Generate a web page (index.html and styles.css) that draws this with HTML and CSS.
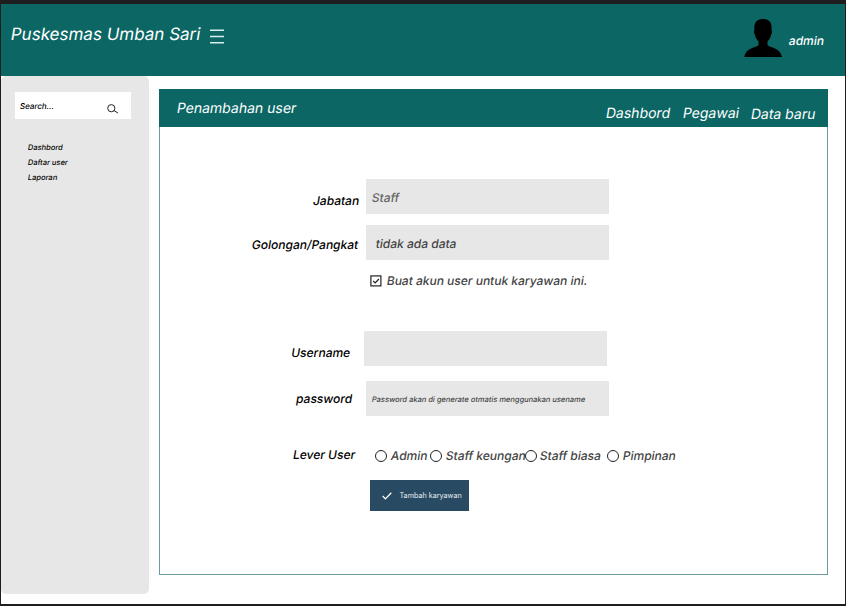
FILE: index.html
```html
<!DOCTYPE html>
<html lang="id">
<head>
<meta charset="utf-8">
<title>Puskesmas Umban Sari</title>
<link rel="stylesheet" href="styles.css">
</head>
<body>
<div class="frame">
  <header class="topbar">
    <h1 class="brand slant">Puskesmas Umban Sari</h1>
    <svg class="burger" width="14" height="15" viewBox="0 0 14 15"><path d="M0 1.300h14M0 7.500h14M0 13.700h14"/></svg>
    <svg class="avatar" width="38" height="38" viewBox="0 0 38 38"><path d="M19 0c5 0 8.600 2.600 8.600 8v3.500c.8.300.7 2.600-.5 4.200-.5 2.800-1.800 5-3.600 6.700v3.600c2 2.600 13 2.800 14.500 12H.2c1.500-9.200 12.300-9.400 14.300-12v-3.600c-1.800-1.700-3.100-3.900-3.600-6.700-1.200-1.600-1.300-3.900-.5-4.200V8C10.400 2.600 14 0 19 0z"/></svg>
    <span class="account slant">admin</span>
  </header>
  <div class="body">
    <aside class="sidebar">
      <div class="search">
        <span class="slant">Search...</span>
        <svg width="12" height="10" viewBox="0 0 12 10"><circle cx="4.300" cy="4.200" r="3.600"/><path d="M7 6.500l4 2.600"/></svg>
      </div>
      <nav class="menu">
        <a class="slant">Dashbord</a>
        <a class="slant">Daftar user</a>
        <a class="slant">Laporan</a>
      </nav>
    </aside>
    <main class="card">
      <div class="card-head">
        <h2 class="card-title slant">Penambahan user</h2>
        <nav class="tabs"><a class="slant">Dashbord</a><a class="slant">Pegawai</a><a class="slant tab-new">Data baru</a></nav>
      </div>
      <form class="form">
        <div class="row row-position"><label class="slant">Jabatan</label><div class="field dim"><span class="slant">Staff</span></div></div>
        <div class="row row-grade"><label class="slant">Golongan/Pangkat</label><div class="field"><span class="slant">tidak ada data</span></div></div>
        <div class="check">
          <svg width="12" height="12" viewBox="0 0 12 12"><rect x=".9" y=".9" width="10" height="10"/><path d="M3.200 6l2 2 3.700-4"/></svg>
          <span class="slant">Buat akun user untuk karyawan ini.</span>
        </div>
        <div class="row row-username"><label class="slant">Username</label><div class="field"></div></div>
        <div class="row row-password"><label class="slant">password</label><div class="field small"><span class="slant">Password akan di generate otmatis menggunakan usename</span></div></div>
        <div class="row row-level">
          <label class="slant">Lever User</label>
          <div class="options">
            <div class="option opt-admin"><i></i><span class="slant">Admin</span></div>
            <div class="option opt-finance"><i></i><span class="slant">Staff keungan</span></div>
            <div class="option opt-regular"><i></i><span class="slant">Staff biasa</span></div>
            <div class="option"><i></i><span class="slant">Pimpinan</span></div>
          </div>
        </div>
        <div class="submit">
          <svg width="10" height="8" viewBox="0 0 10 8"><path d="M.7 4l2.700 2.900L9.300.8"/></svg>
          <span>Tambah karyawan</span>
        </div>
      </form>
    </main>
  </div>
</div>
</body>
</html>
```

FILE: styles.css
```css
* { box-sizing: border-box; }
body {
  margin: 0;
  height: 606px;
  padding: 4px 1.500px 2.500px 1px;
  overflow: hidden;
  background: #1e1e20;
  font-family: Inter, "Liberation Sans", sans-serif;
  font-optical-sizing: none;
  font-weight: 500;
  color: #000;
}
h1, h2 { margin: 0; font-weight: 400; }
svg { flex: none; fill: none; }
span, a, label { white-space: nowrap; }
.slant { display: inline-block; transform: skewX(-9.400deg); }
.frame { height: 599.500px; background: #fff; }

.topbar {
  display: flex;
  align-items: flex-start;
  height: 72px;
  padding-left: 10px;
  background: #0b6664;
  color: #fff;
}
.brand { width: 199px; margin-top: 20px; font-size: 17px; line-height: 20px; white-space: nowrap; }
.burger { margin-top: 24.500px; stroke: #d5eeee; stroke-width: 1.600; }
.avatar { margin: 15px 0 0 519.500px; fill: #000; }
.account { margin: 28px 0 0 7.500px; font-size: 12px; line-height: 18px; }

.body { display: flex; align-items: flex-start; }
.sidebar {
  width: 148px;
  height: 518px;
  padding: 16px 18px 0 14px;
  border-radius: 5px;
  background: #e7e7e7;
}
.search {
  display: flex;
  align-items: center;
  justify-content: space-between;
  height: 27px;
  padding: 0 12px 0 5px;
  background: #fff;
  font-size: 8px;
}
.search svg { margin-top: 6px; stroke: #222; stroke-width: 1; }
.menu { display: flex; flex-direction: column; align-items: flex-start; padding: 21px 0 0 13px; font-size: 7.500px; line-height: 15px; }

.card { width: 669px; height: 486px; margin: 13px 0 0 10px; border: 1px solid #6b9aa0; border-top: 0; }
.card-head {
  display: flex;
  align-items: flex-start;
  justify-content: space-between;
  height: 38px;
  margin: 0 -1px;
  padding: 0 12px 0 18px;
  background: #0b6664;
  color: #fff;
}
.card-title { margin-top: 9px; font-size: 14px; line-height: 20px; }
.tabs { display: flex; gap: 12.500px; margin-top: 14px; font-size: 14px; font-weight: 400; line-height: 20px; }
.tab-new { margin-top: 1px; }

.form { padding-top: 52px; font-size: 12px; }
.row { display: flex; align-items: flex-start; height: 35px; }
.row label { flex: none; width: 198px; margin-right: 8px; line-height: 16px; text-align: right; transform-origin: 50% 100%; }
.field { width: 242.500px; height: 35px; padding-left: 6px; background: #e7e7e7; color: #444; line-height: 37px; white-space: nowrap; }
.dim { color: #666; }
.row-position label { margin-top: 14px; }
.row-grade { margin-top: 11px; }
.row-grade label { width: 197px; margin-right: 9px; margin-top: 12px; }
.row-grade .field { padding-left: 10px; }
.check { display: flex; align-items: center; gap: 4.500px; height: 16px; margin: 12.500px 0 0 210px; color: #444; }
.check svg { stroke: #222; stroke-width: 1.200; }
.row-username { margin-top: 42.500px; }
.row-username label { width: 189px; margin-right: 15px; margin-top: 14px; }
.row-password { margin-top: 15px; }
.row-password label { width: 191px; margin-right: 15px; margin-top: 10px; }
.field.small { font-size: 7.500px; }
.row-level { height: 16px; margin-top: 31px; }
.row-level label { width: 194px; margin-right: 21px; }
.options { display: flex; color: #444; line-height: 17px; }
.option { display: flex; align-items: center; gap: 3.500px; flex: none; }
.option i { flex: none; width: 12px; height: 12px; border: 1.400px solid #222; border-radius: 50%; }
.opt-admin { width: 55px; }
.opt-finance { width: 94.500px; }
.opt-regular { width: 82.500px; }
.submit {
  display: flex;
  align-items: center;
  gap: 8px;
  width: 99px;
  height: 31px;
  margin: 16.500px 0 0 210px;
  padding-left: 11.500px;
  background: #294a63;
  color: #e8eef2;
  font-size: 7.200px;
  font-weight: 400;
}
.submit svg { margin-top: 1px; stroke: #fff; stroke-width: 1.300; }
```
